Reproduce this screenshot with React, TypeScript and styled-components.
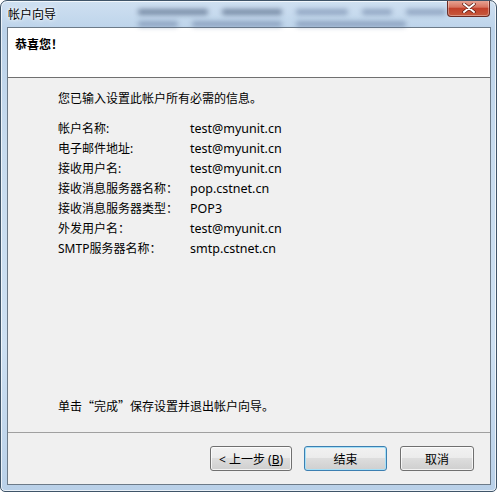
import React from 'react';
import styled, { createGlobalStyle } from 'styled-components';

const GlobalStyle = createGlobalStyle`
  html, body {
    margin: 0;
    padding: 0;
    background: #ffffff;
  }
  body {
    font-family: "Noto Sans", "Noto Sans CJK SC", sans-serif;
    font-size: 12px;
    color: #000;
  }
`;

const Window = styled.div`
  box-sizing: border-box;
  width: 497px;
  height: 492px;
  display: flex;
  flex-direction: column;
  border: 1px solid #3f5468;
  border-radius: 7px 7px 5px 5px;
  background: linear-gradient(180deg, #cfe0f1 0%, #bcd3ea 6%, #c7dbee 30%, #cde0f2 70%, #b9d0e8 100%);
  box-shadow: inset 0 0 0 1px rgba(255, 255, 255, 0.7);
  overflow: hidden;
`;

const TitleBar = styled.div`
  height: 26px;
  display: flex;
  align-items: flex-start;
`;

const Title = styled.div`
  padding: 5px 0 0 7px;
  width: 120px;
  font-family: "Noto Sans CJK SC", sans-serif;
  font-size: 12px;
  line-height: 16px;
  color: #000;
  text-shadow: 0 0 6px #ffffff, 0 0 3px #ffffff;
`;

const Blur = styled.div`
  flex: 1;
  display: flex;
  flex-direction: column;
  gap: 6px;
  padding: 8px 0 0 10px;
  filter: blur(2.5px);
  opacity: 0.5;
`;

const BlurLine = styled.div`
  display: flex;
  gap: 14px;
`;

const Smudge = styled.span<{ w: number; dark?: boolean }>`
  display: block;
  width: ${(p) => p.w}px;
  height: 6px;
  background: ${(p) => (p.dark ? '#2a3f60' : '#5c7398')};
  border-radius: 2px;
`;

const CloseButton = styled.div`
  width: 41px;
  height: 16px;
  margin: -1px 6px 0 0;
  display: flex;
  align-items: center;
  justify-content: center;
  border: 1px solid #6b2a22;
  border-top: none;
  border-radius: 0 0 4px 4px;
  background: linear-gradient(180deg, #e9a99a 0%, #d8735f 45%, #c2402a 52%, #c65a3d 100%);
  box-shadow: inset 0 0 0 1px rgba(255, 255, 255, 0.35);
`;

const Client = styled.div`
  flex: 1;
  margin: 0 5px 6px 6px;
  display: flex;
  flex-direction: column;
  border: 1px solid #6c7a88;
  background: #f0f0f0;
`;

const Header = styled.div`
  height: 50px;
  background: #ffffff;
  border-bottom: 1px solid #707070;
  padding: 8px 0 0 7px;
  box-sizing: border-box;
`;

const HeaderTitle = styled.div`
  font-family: "Noto Sans CJK SC", sans-serif;
  font-size: 12px;
  font-weight: 700;
  line-height: 16px;
`;

const Body = styled.div`
  flex: 1;
  display: flex;
  flex-direction: column;
  padding: 13px 0 0 50px;
`;

const Intro = styled.div`
  line-height: 16px;
  margin-bottom: 11px;
`;

const InfoGrid = styled.div`
  display: grid;
  grid-template-columns: 132px auto;
  grid-auto-rows: 20px;
  align-items: center;
`;

const Label = styled.div`
  white-space: nowrap;
`;

const Value = styled.div`
  white-space: nowrap;
  font-size: 12.5px;
`;

const Spacer = styled.div`
  flex: 1;
`;

const Finish = styled.div`
  font-family: "Noto Sans CJK SC", sans-serif;
  line-height: 16px;
  margin-bottom: 18px;
`;

const Footer = styled.div`
  height: 52px;
  border-top: 1px solid #a0a0a0;
  display: flex;
  justify-content: flex-end;
  align-items: flex-start;
  padding: 13px 16px 0 0;
  box-sizing: border-box;
`;

const Button = styled.button<{ w: number; primary?: boolean; gap?: number }>`
  width: ${(p) => p.w}px;
  height: 25px;
  margin-left: ${(p) => p.gap ?? 0}px;
  padding: 0;
  font-family: "Noto Sans", "Noto Sans CJK SC", sans-serif;
  font-size: 12px;
  color: #000;
  border: 1px solid ${(p) => (p.primary ? '#3c7fb1' : '#707070')};
  border-radius: 3px;
  background: linear-gradient(180deg, #f2f2f2 0%, #ebebeb 49%, #dddddd 50%, #cfcfcf 100%);
  box-shadow: inset 0 0 0 1px ${(p) => (p.primary ? '#a6e0f7' : 'rgba(255,255,255,0.75)')};
`;

const Accel = styled.span`
  text-decoration: underline;
`;

const rows: [string, string][] = [
  ['帐户名称:', 'test@myunit.cn'],
  ['电子邮件地址:', 'test@myunit.cn'],
  ['接收用户名:', 'test@myunit.cn'],
  ['接收消息服务器名称：', 'pop.cstnet.cn'],
  ['接收消息服务器类型：', 'POP3'],
  ['外发用户名：', 'test@myunit.cn'],
  ['SMTP服务器名称：', 'smtp.cstnet.cn'],
];

const CloseIcon = () => (
  <svg width="14" height="10" viewBox="0 0 14 10">
    <path d="M2 1 L12 9 M12 1 L2 9" stroke="#5a1a10" strokeWidth="3.4" strokeLinecap="round" />
    <path d="M2 1 L12 9 M12 1 L2 9" stroke="#ffffff" strokeWidth="2" strokeLinecap="round" />
  </svg>
);

export default function App() {
  return (
    <>
      <GlobalStyle />
      <Window>
        <TitleBar>
          <Title>帐户向导</Title>
          <Blur>
            <BlurLine>
              <Smudge w={70} dark />
              <Smudge w={60} dark />
              <Smudge w={52} />
              <Smudge w={30} />
              <Smudge w={40} />
            </BlurLine>
            <BlurLine>
              <Smudge w={40} />
              <Smudge w={90} />
              <Smudge w={110} />
            </BlurLine>
          </Blur>
          <CloseButton>
            <CloseIcon />
          </CloseButton>
        </TitleBar>
        <Client>
          <Header>
            <HeaderTitle>恭喜您！</HeaderTitle>
          </Header>
          <Body>
            <Intro>您已输入设置此帐户所有必需的信息。</Intro>
            <InfoGrid>
              {rows.map(([label, value]) => (
                <React.Fragment key={label}>
                  <Label>{label}</Label>
                  <Value>{value}</Value>
                </React.Fragment>
              ))}
            </InfoGrid>
            <Spacer />
            <Finish>单击“完成”保存设置并退出帐户向导。</Finish>
          </Body>
          <Footer>
            <Button w={82}>
              &lt; 上一步 (<Accel>B</Accel>)
            </Button>
            <Button w={83} gap={12} primary>
              结束
            </Button>
            <Button w={74} gap={13}>
              取消
            </Button>
          </Footer>
        </Client>
      </Window>
    </>
  );
}
